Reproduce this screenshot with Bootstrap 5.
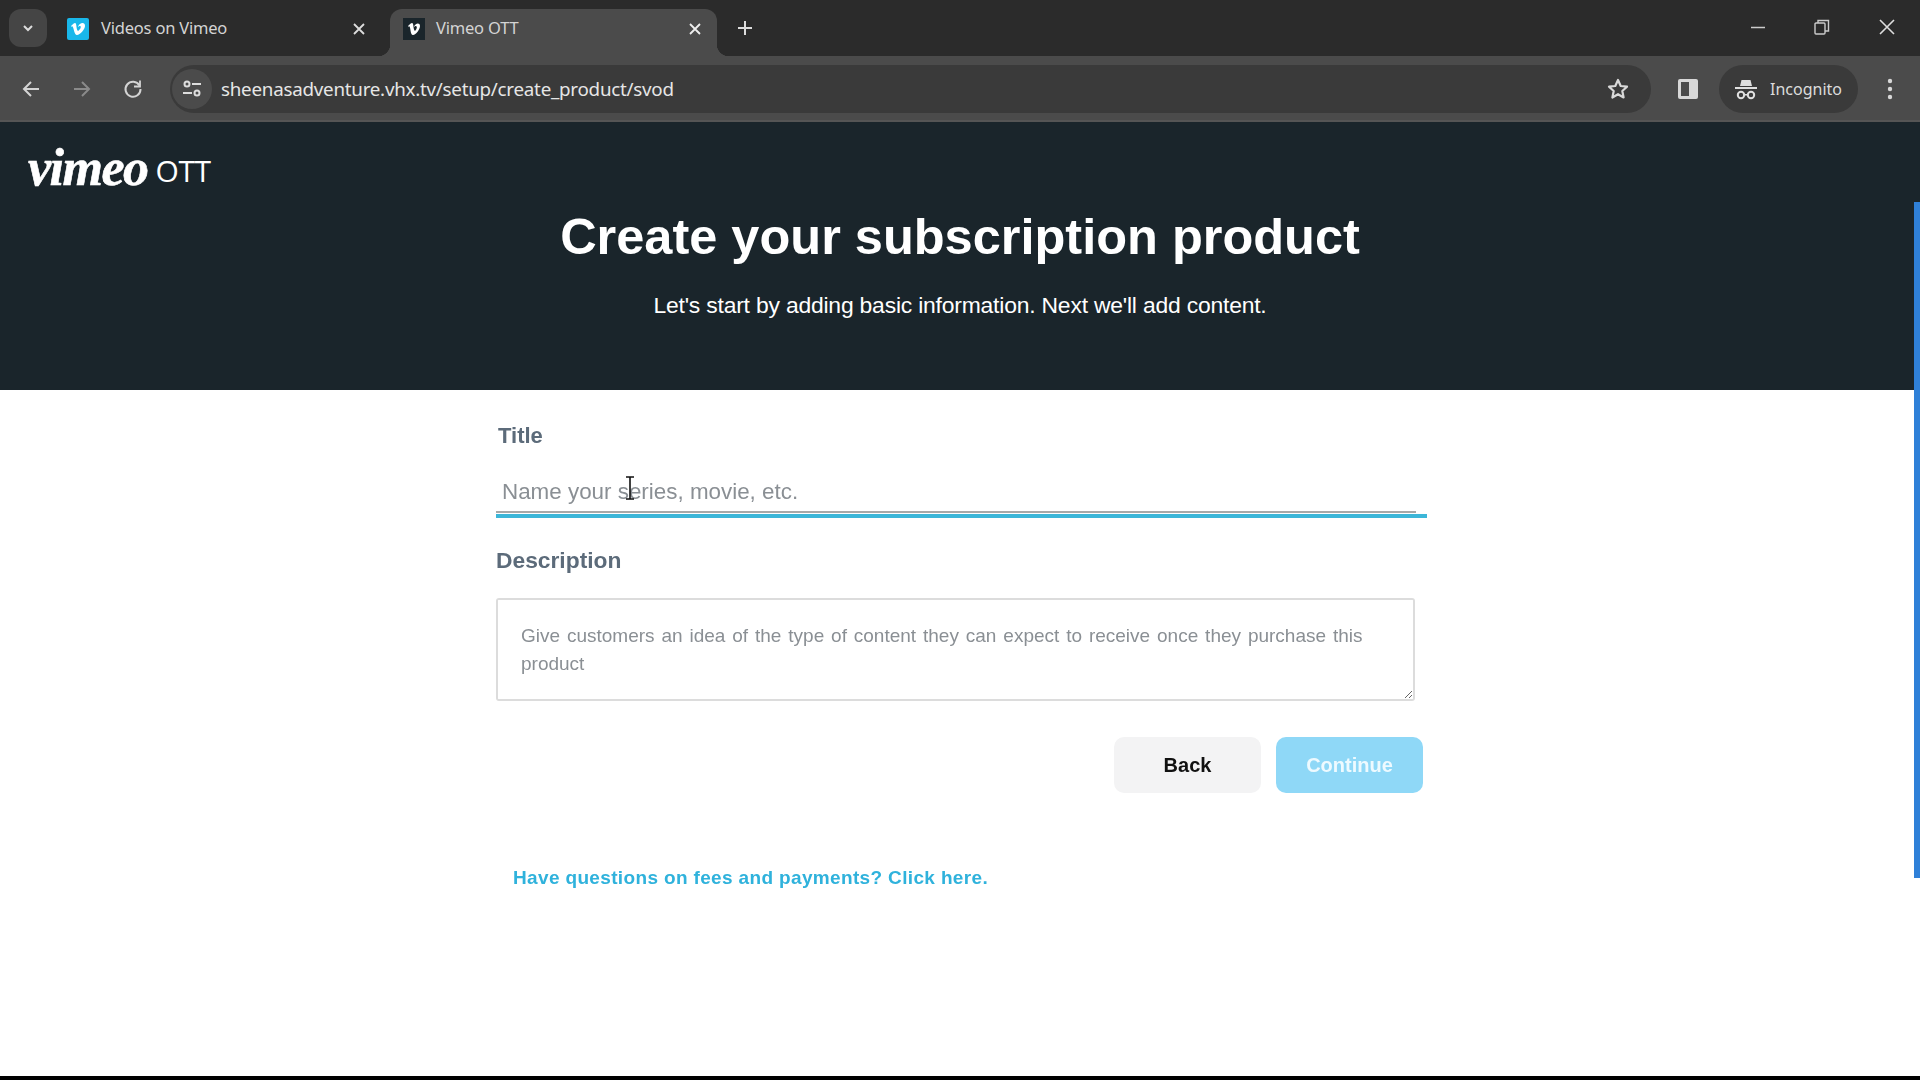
<!DOCTYPE html>
<html lang="en">
<head>
  <meta charset="UTF-8" />
  <title>Vimeo OTT</title>
  <link href="https://cdn.jsdelivr.net/npm/bootstrap@5.3.3/dist/css/bootstrap.min.css" rel="stylesheet">
  <style>
    html, body { height: 100%; margin: 0; overflow: hidden; }
    body { font-family: "Liberation Sans", Arial, sans-serif; background: #000; }
    .shell { height: 1076px; width: 1920px; background: #fff; }

    /* chrome */
    .tabstrip { height: 56px; background: #2b2b2b; color: #c9c9c9; padding-left: 9px; }
    .tab-menu { width: 38px; height: 38px; border-radius: 12px; background: #454545; margin-top: 9px; }
    .browser-tab { height: 47px; margin-top: 9px; padding: 0 12px 8px 12px; font-family: "Noto Sans", sans-serif; font-size: 16.5px; letter-spacing: -.2px; color: #d4d4d4; position: relative; }
    .browser-tab.on { background: #4b4b4b; border-radius: 12px 12px 0 0; width: 327px; padding-right: 15px; }
    .browser-tab.on::before, .browser-tab.on::after { content: ""; position: absolute; bottom: 0; width: 12px; height: 12px; }
    .browser-tab.on::before { left: -12px; background: radial-gradient(circle at 0 0, transparent 12px, #4b4b4b 12.5px); }
    .browser-tab.on::after { right: -12px; background: radial-gradient(circle at 100% 0, transparent 12px, #4b4b4b 12.5px); }
    .first-tab { margin-left: 5px; width: 338px; padding-right: 24px; }
    .favicon { width: 22px; height: 22px; flex: none; margin-right: 12px; margin-left: 3px; }
    .on .favicon { margin-left: 1px; margin-right: 11px; }
    .tab-title { flex: 1; }
    .new-tab { margin-left: 20px; margin-top: 9px; height: 38px; }
    .win-btns { gap: 48px; padding-right: 24px; margin-top: 8px; height: 38px; }
    .toolbar { height: 66px; background: #4b4b4b; padding: 2px 27px 0 21px; border-bottom: 2px solid #555; }
    .nav-btns { gap: 31px; width: 149px; }
    .omnibox { width: 1481px; height: 48px; border-radius: 24px; background: #3a3a3a; padding: 0 21px 0 2px; color: #e6e6e6; font-family: "Noto Sans", sans-serif; font-size: 18.8px; letter-spacing: -.25px; }
    .site-chip { width: 40px; height: 40px; border-radius: 50%; background: #4b4b4b; margin-right: 9px; }
    .incog-pill { height: 48px; width: 139px; border-radius: 24px; background: #3a3a3a; color: #dcdcdc; font-family: "Noto Sans", sans-serif; font-size: 16px; gap: 13px; padding-left: 16px; }
    .side-icon { margin: 0 21px 0 27px; }

    /* page */
    .viewport { height: 954px; overflow: hidden; }
    .hero { height: 268px; background: #1a252b; color: #fff; padding-top: 24px; }
    .logo-row { padding-left: 28px; height: 44px; gap: 8px; }
    .logo-word { font-family: "Liberation Serif", serif; font-style: italic; font-weight: 700; font-size: 52px; line-height: 40px; letter-spacing: -1.5px; -webkit-text-stroke: .6px #fff; }
    .logo-ott { font-family: "Open Sans", sans-serif; font-size: 30px; line-height: 40px; letter-spacing: -.5px; margin-top: 6px; }
    .hero-title { font-size: 50.5px; font-weight: 700; line-height: 56px; margin: 19px 0 0; }
    .hero-sub { font-size: 22.9px; line-height: 28px; margin: 26px 0 0; letter-spacing: -.2px; }
    .form-wrap { width: 931px; margin-left: 496px; padding-top: 32px; position: relative; }
    .fld-label { font-size: 22.8px; font-weight: 700; color: #5c6b7a; margin: 0; line-height: 28px; }
    .fld-label.shifted { margin-left: 2px; font-size: 22px; }
    .title-input { border: 0; border-bottom: 2px solid #a8a8a8; border-radius: 0; width: 920px; height: 49px; padding: 8px 6px 0; font-size: 22.4px; margin-top: 14px; box-shadow: none; }
    .title-input::placeholder, .desc-input::placeholder { color: #8a8f94; opacity: 1; }
    .focus-bar { height: 4px; background: #3cb6d8; margin: 1px 0 28px; }
    .desc-input { width: 919px; height: 103px; margin-top: 24px; padding: 22px 23px; border: 2px solid #dcdcdc; border-radius: 3px; font-size: 19px; line-height: 28px; word-spacing: 1.6px; box-shadow: none; }
    .form-actions { margin-top: 35.5px; width: 927px; gap: 15px; }
    .act-btn { width: 147px; height: 56px; border: 0; border-radius: 10px; font-size: 20px; font-weight: 700; }
    .act-back { background: #f3f3f4; color: #111; }
    .act-back:hover { background: #e9e9ea; color: #111; }
    .act-go, .act-go:disabled { background: #8fd8f7; color: #eefaff; opacity: 1; }
    .fee-link { display: inline-block; margin: 71px 0 0 17px; font-size: 19px; font-weight: 700; color: #2fb2dc; text-decoration: none; letter-spacing: .35px; }
    .cursor-mark { position: absolute; left: 128px; top: 86px; }
    .page-scroll { position: absolute; right: 0; top: 202px; width: 6px; height: 676px; background: #2f80d8; }
  </style>
</head>
<body>
  <div class="shell position-relative">
    <!-- tabs -->
    <div class="tabstrip d-flex align-items-start">
      <div class="tab-menu d-flex align-items-center justify-content-center">
        <svg width="14" height="14" viewBox="0 0 14 14" fill="none" stroke="#ddd" stroke-width="2"><path d="M3 5l4 4 4-4"/></svg>
      </div>
      <div class="browser-tab first-tab d-flex align-items-center">
        <svg class="favicon" viewBox="0 0 22 22"><rect width="22" height="22" rx="2" fill="#19b7ea"/><path d="M4 8c2-2 3-3 4-3 2 0 1 7 3 8 2-1 4-5 2-5-1 0-1 .5-2 1 1-4 7-6 7-1 0 3-5 9-8 9-3 0-3-8-5-9l-1 1z" fill="#fff"/></svg>
        <span class="tab-title">Videos on Vimeo</span>
        <svg width="14" height="14" viewBox="0 0 14 14" stroke="#ddd" stroke-width="1.8"><path d="M2 2l10 10M12 2L2 12"/></svg>
      </div>
      <div class="browser-tab on d-flex align-items-center">
        <svg class="favicon" viewBox="0 0 22 22"><rect width="22" height="22" fill="#1a252b"/><path d="M5 8c2-2 3-3 4-3 2 0 1 7 3 8 1-1 3-4 1-5-1 0-1 .5-2 1 1-4 6-5 6-1 0 3-4 9-7 9-3 0-2-8-4-9l-1 1z" fill="#fff"/></svg>
        <span class="tab-title">Vimeo OTT</span>
        <svg width="14" height="14" viewBox="0 0 14 14" stroke="#eee" stroke-width="1.8"><path d="M2 2l10 10M12 2L2 12"/></svg>
      </div>
      <div class="new-tab d-flex align-items-center">
        <svg width="16" height="16" viewBox="0 0 16 16" stroke="#ddd" stroke-width="2"><path d="M8 1v14M1 8h14"/></svg>
      </div>
      <div class="win-btns ms-auto d-flex align-items-center">
        <svg width="16" height="16" viewBox="0 0 16 16" stroke="#ccc" stroke-width="1.5"><path d="M1 8.500h14"/></svg>
        <svg width="16" height="16" viewBox="0 0 16 16" fill="none" stroke="#ccc" stroke-width="1.4"><rect x="1" y="4" width="10" height="11" rx="1"/><path d="M4 4V1.500h10.500V12H11"/></svg>
        <svg width="18" height="18" viewBox="0 0 18 18" stroke="#ddd" stroke-width="1.6"><path d="M2 2l14 14M16 2L2 16"/></svg>
      </div>
    </div>

    <!-- address bar -->
    <div class="toolbar d-flex align-items-center">
      <div class="nav-btns d-flex align-items-center">
        <svg width="20" height="20" viewBox="0 0 20 20" fill="none" stroke="#d4d4d4" stroke-width="2"><path d="M18 10H3M10 3l-7 7 7 7"/></svg>
        <svg width="20" height="20" viewBox="0 0 20 20" fill="none" stroke="#8a8a8a" stroke-width="2"><path d="M2 10h15M10 3l7 7-7 7"/></svg>
        <svg width="20" height="20" viewBox="0 0 20 20" fill="none" stroke="#d4d4d4" stroke-width="2"><path d="M16.500 6.500A7.500 7.500 0 1 0 17.500 10"/><path d="M17 1.500v6h-6" stroke-width="1.800"/></svg>
      </div>
      <div class="omnibox d-flex align-items-center">
        <div class="site-chip d-flex align-items-center justify-content-center">
          <svg width="20" height="18" viewBox="0 0 20 18" fill="none" stroke="#ddd" stroke-width="2"><circle cx="5" cy="4" r="2.500"/><path d="M10 4h9M1 13h9"/><circle cx="15" cy="13" r="2.500"/></svg>
        </div>
        <span>sheenasadventure.vhx.tv/setup/create_product/svod</span>
        <svg class="ms-auto" width="24" height="24" viewBox="0 0 24 24" fill="none" stroke="#d8d8d8" stroke-width="2.200" stroke-linejoin="round"><path d="M12 3l2.700 6 6.300.7-4.700 4.300 1.300 6.500L12 17.200 6.400 20.500 7.700 14 3 9.700l6.300-.7z"/></svg>
      </div>
      <svg class="side-icon" width="20" height="20" viewBox="0 0 20 20"><rect width="20" height="20" rx="2" fill="#d8d8d8"/><rect x="3" y="3" width="8" height="14" fill="#4b4b4b"/></svg>
      <div class="incog-pill d-flex align-items-center">
        <svg width="22" height="22" viewBox="0 0 22 22" fill="#e0e0e0"><path d="M6.500 2h9l1.500 6H5z"/><rect x="0" y="9" width="22" height="2"/><circle cx="6" cy="17" r="3.200" fill="none" stroke="#e0e0e0" stroke-width="2"/><circle cx="16" cy="17" r="3.200" fill="none" stroke="#e0e0e0" stroke-width="2"/><path d="M9 16h4v1.500H9z"/></svg>
        <span>Incognito</span>
      </div>
      <svg class="ms-auto" width="6" height="22" viewBox="0 0 6 22" fill="#d8d8d8"><circle cx="3" cy="3" r="2.200"/><circle cx="3" cy="11" r="2.200"/><circle cx="3" cy="19" r="2.200"/></svg>
    </div>

    <div class="viewport">
      <div class="hero">
        <div class="logo-row d-flex align-items-center">
          <span class="logo-word">vimeo</span><span class="logo-ott">OTT</span>
        </div>
        <h1 class="hero-title text-center">Create your subscription product</h1>
        <p class="hero-sub text-center">Let's start by adding basic information. Next we'll add content.</p>
      </div>

      <div class="form-wrap">
        <label class="fld-label shifted d-block" for="prodTitle">Title</label>
        <input id="prodTitle" class="form-control title-input" type="text" placeholder="Name your series, movie, etc.">
        <div class="focus-bar"></div>
        <label class="fld-label d-block" for="prodDesc">Description</label>
        <textarea id="prodDesc" class="form-control desc-input" placeholder="Give customers an idea of the type of content they can expect to receive once they purchase this product"></textarea>
        <div class="form-actions d-flex justify-content-end">
          <button class="btn act-btn act-back" type="button">Back</button>
          <button class="btn act-btn act-go" type="button" disabled>Continue</button>
        </div>
        <a class="fee-link" href="#">Have questions on fees and payments? Click here.</a>
        <svg class="cursor-mark" width="12" height="24" viewBox="0 0 12 24" fill="none" stroke="#111" stroke-width="1.6"><path d="M2 1h8M6 1v22M2 23h8"/></svg>
      </div>
    </div>
    <div class="page-scroll"></div>
  </div>
  <script src="https://cdn.jsdelivr.net/npm/bootstrap@5.3.3/dist/js/bootstrap.bundle.min.js"></script>
</body>
</html>
